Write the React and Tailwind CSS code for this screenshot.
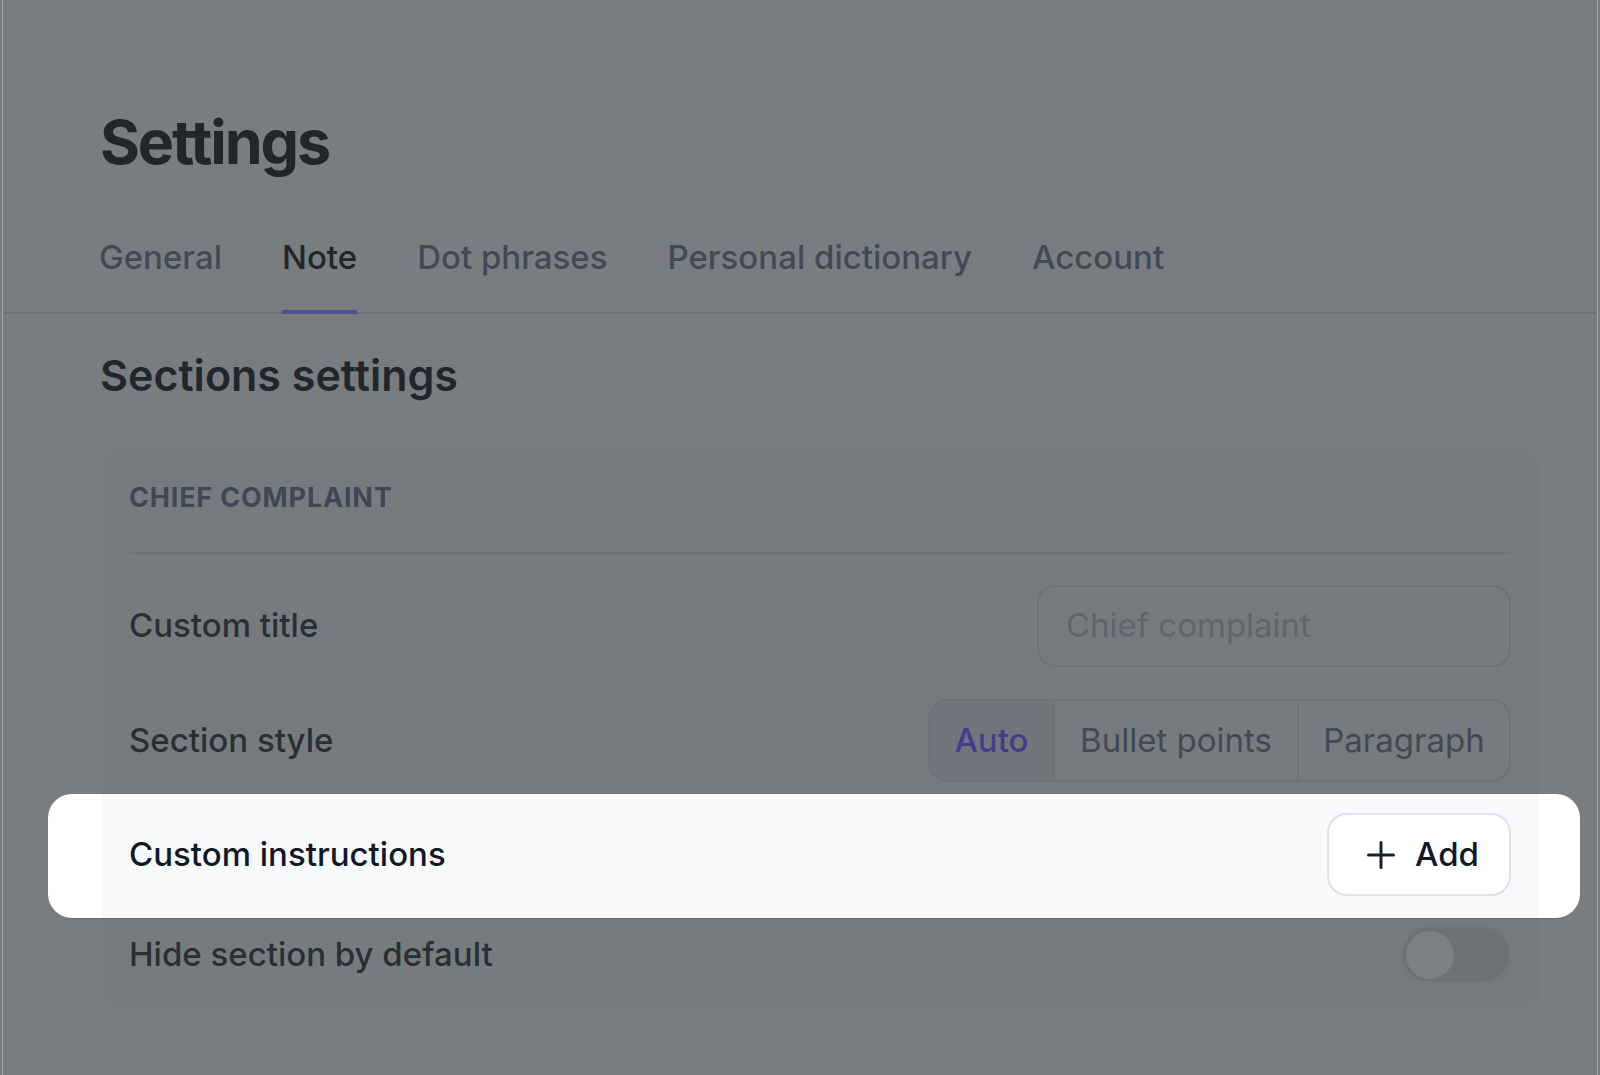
import React from "react";

const tabs = ["General", "Note", "Dot phrases", "Personal dictionary", "Account"];

function PlusIcon() {
  return (
    <svg width="28" height="28" viewBox="0 0 28 28" fill="none" stroke="#1b2228" strokeWidth="3" strokeLinecap="round">
      <line x1="14" y1="1.5" x2="14" y2="26.5" />
      <line x1="1.5" y1="14" x2="26.5" y2="14" />
    </svg>
  );
}

export default function App() {
  return (
    <div className="relative h-[1075px] w-full overflow-hidden bg-[#797d80] font-['Inter','Noto_Sans',sans-serif]">
      <div className="mx-[2px] h-full border-x border-[#a2a5a8]">
        <div className="pl-[97px] pt-[112px]">
          <h1 className="text-[61px] font-bold leading-none tracking-[-0.035em] text-[#1f272c]">Settings</h1>
        </div>

        <div className="mt-[68px] flex gap-[60px] border-b-2 border-[#6c7176] pl-[96px]">
          {tabs.map((t) => (
            <div
              key={t}
              className={
                t === "Note"
                  ? "-mb-[2px] border-b-4 border-[#4e5486] pb-[36px] text-[33px] font-medium leading-none text-[#1f272c]"
                  : "-mb-[2px] border-b-4 border-transparent pb-[36px] text-[33px] font-medium leading-none text-[#414956]"
              }
            >
              {t}
            </div>
          ))}
        </div>

        <h2 className="mt-[40px] pl-[97px] text-[43px] font-semibold leading-none text-[#1f272c]">Sections settings</h2>

        <div className="ml-[99px] mt-[50px] w-[1437px] rounded-[16px] bg-[#777b7e] pb-[28px] pl-[27px] pr-[28px] pt-[37px]">
          <div className="border-b-2 border-[#6d7277] pb-[41px] text-[27px] font-bold uppercase leading-none tracking-[0.03em] text-[#3f4756]">
            Chief complaint
          </div>

          <div className="mt-[31px] flex h-[82px] items-center justify-between">
            <span className="text-[33px] font-medium text-[#283036]">Custom title</span>
            <div className="flex h-full w-[474px] items-center rounded-[18px] border-2 border-[#6e7378] pl-[27px] text-[33px] text-[#5f666d]">
              Chief complaint
            </div>
          </div>

          <div className="mt-[32px] flex h-[83px] items-center justify-between">
            <span className="text-[33px] font-medium text-[#283036]">Section style</span>
            <div className="flex h-full overflow-hidden rounded-[20px] border-2 border-[#6e7378]">
              <div className="flex w-[123px] items-center justify-center bg-[#71767d] text-[33px] font-medium text-[#433c8c]">Auto</div>
              <div className="flex w-[244px] items-center justify-center border-l-2 border-[#6e7378] text-[33px] text-[#414955]">Bullet points</div>
              <div className="flex w-[212px] items-center justify-center border-l-2 border-[#6e7378] text-[33px] text-[#414955]">Paragraph</div>
            </div>
          </div>

          <div className="relative -ml-[27px] -mr-[28px] mt-[12px] h-[124px]">
            <div className="absolute -left-[54px] -right-[41px] bottom-0 top-0 rounded-[24px] bg-white shadow-[0_1px_1px_rgba(0,0,0,0.12)]" />
            <div className="relative flex h-full items-center justify-between bg-[#f8f9fb] pb-[3px] pl-[27px] pr-[28px]">
              <span className="text-[33px] font-medium text-[#111827]">Custom instructions</span>
              <button className="flex h-[83px] items-center gap-[20px] rounded-[20px] border-2 border-[#dfe2ea] bg-white pl-[38px] pr-[30px]">
                <PlusIcon />
                <span className="text-[33px] font-medium leading-none text-[#111827]">Add</span>
              </button>
            </div>
          </div>

          <div className="mt-[8px] flex h-[57px] items-center justify-between">
            <span className="text-[33px] font-medium text-[#283036]">Hide section by default</span>
            <div className="flex h-[57px] w-[110px] items-center rounded-full border-2 border-[#72777b] bg-[#6d7276] pl-[3px]">
              <div className="h-[48px] w-[48px] rounded-full bg-[#7c8185]" />
            </div>
          </div>
        </div>
      </div>
    </div>
  );
}
